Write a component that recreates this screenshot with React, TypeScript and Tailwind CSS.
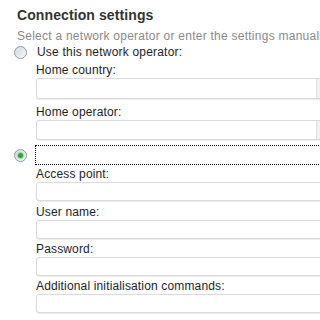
import React from "react";

const font = { fontFamily: "'Liberation Sans', Arial, sans-serif" };

function Radio({ checked }: { checked?: boolean }) {
  return (
    <div className="w-[13px] h-[13px] rounded-full border border-[#8f9ba7] bg-gradient-to-br from-[#d3d9df] to-[#f7f8f9] flex items-center justify-center shrink-0">
      {checked && <div className="w-[5px] h-[5px] rounded-full bg-[#2fa33a] shadow-[0_0_1px_1px_#9fd8a4]" />}
    </div>
  );
}

function Label({ text, mt }: { text: string; mt: string }) {
  return (
    <div className={`h-[16px] leading-[16px] text-[12px] tracking-[0.15px] text-[#1e1e1e] whitespace-nowrap ${mt}`}>{text}</div>
  );
}

function Field({ h, combo }: { h: string; combo?: boolean }) {
  return (
    <div className={`${h} w-[300px] rounded-[3px] border border-[#dadada] bg-white shadow-[0_1px_0_#ececec] flex`}>
      <div className="flex-1" />
      {combo && <div className="w-[19px] h-full border-l border-[#e2e2e2] bg-gradient-to-r from-[#efefef] to-[#fafafa]" />}
    </div>
  );
}

export default function App() {
  return (
    <div className="w-[320px] h-[320px] overflow-hidden bg-white" style={font}>
      <div className="pt-[3px] pl-[17px] h-[28px]">
        <div className="h-[25px] leading-[24px] text-[14px] font-bold tracking-[0.1px] text-[#333333] whitespace-nowrap">Connection settings</div>
      </div>
      <div className="pl-[17px] h-[16px] leading-[16px] text-[12px] tracking-[0.25px] text-[#8a8a8a] whitespace-nowrap">
        Select a network operator or enter the settings manually.
      </div>
      <div className="flex items-center h-[16px] pl-[14px]">
        <Radio />
        <div className="ml-[10px] text-[12px] leading-[16px] tracking-[0.2px] text-[#1e1e1e] whitespace-nowrap">Use this network operator:</div>
      </div>
      <div className="pl-[36px]">
        <Label text="Home country:" mt="mt-[2px]" />
        <Field h="h-[21px]" combo />
        <Label text="Home operator:" mt="mt-[5px]" />
        <Field h="h-[20px]" combo />
      </div>
      <div className="flex items-center mt-[5px] h-[20px] pl-[14px]">
        <Radio checked />
        <div className="ml-[8px] h-[20px] w-[300px] border border-dotted border-black shrink-0" />
      </div>
      <div className="pl-[36px]">
        <Label text="Access point:" mt="mt-[1px]" />
        <Field h="h-[19px]" />
        <Label text="User name:" mt="mt-[3px]" />
        <Field h="h-[19px]" />
        <Label text="Password:" mt="mt-[2px]" />
        <Field h="h-[19px]" />
        <Label text="Additional initialisation commands:" mt="mt-[2px]" />
        <Field h="h-[19px]" />
      </div>
    </div>
  );
}
